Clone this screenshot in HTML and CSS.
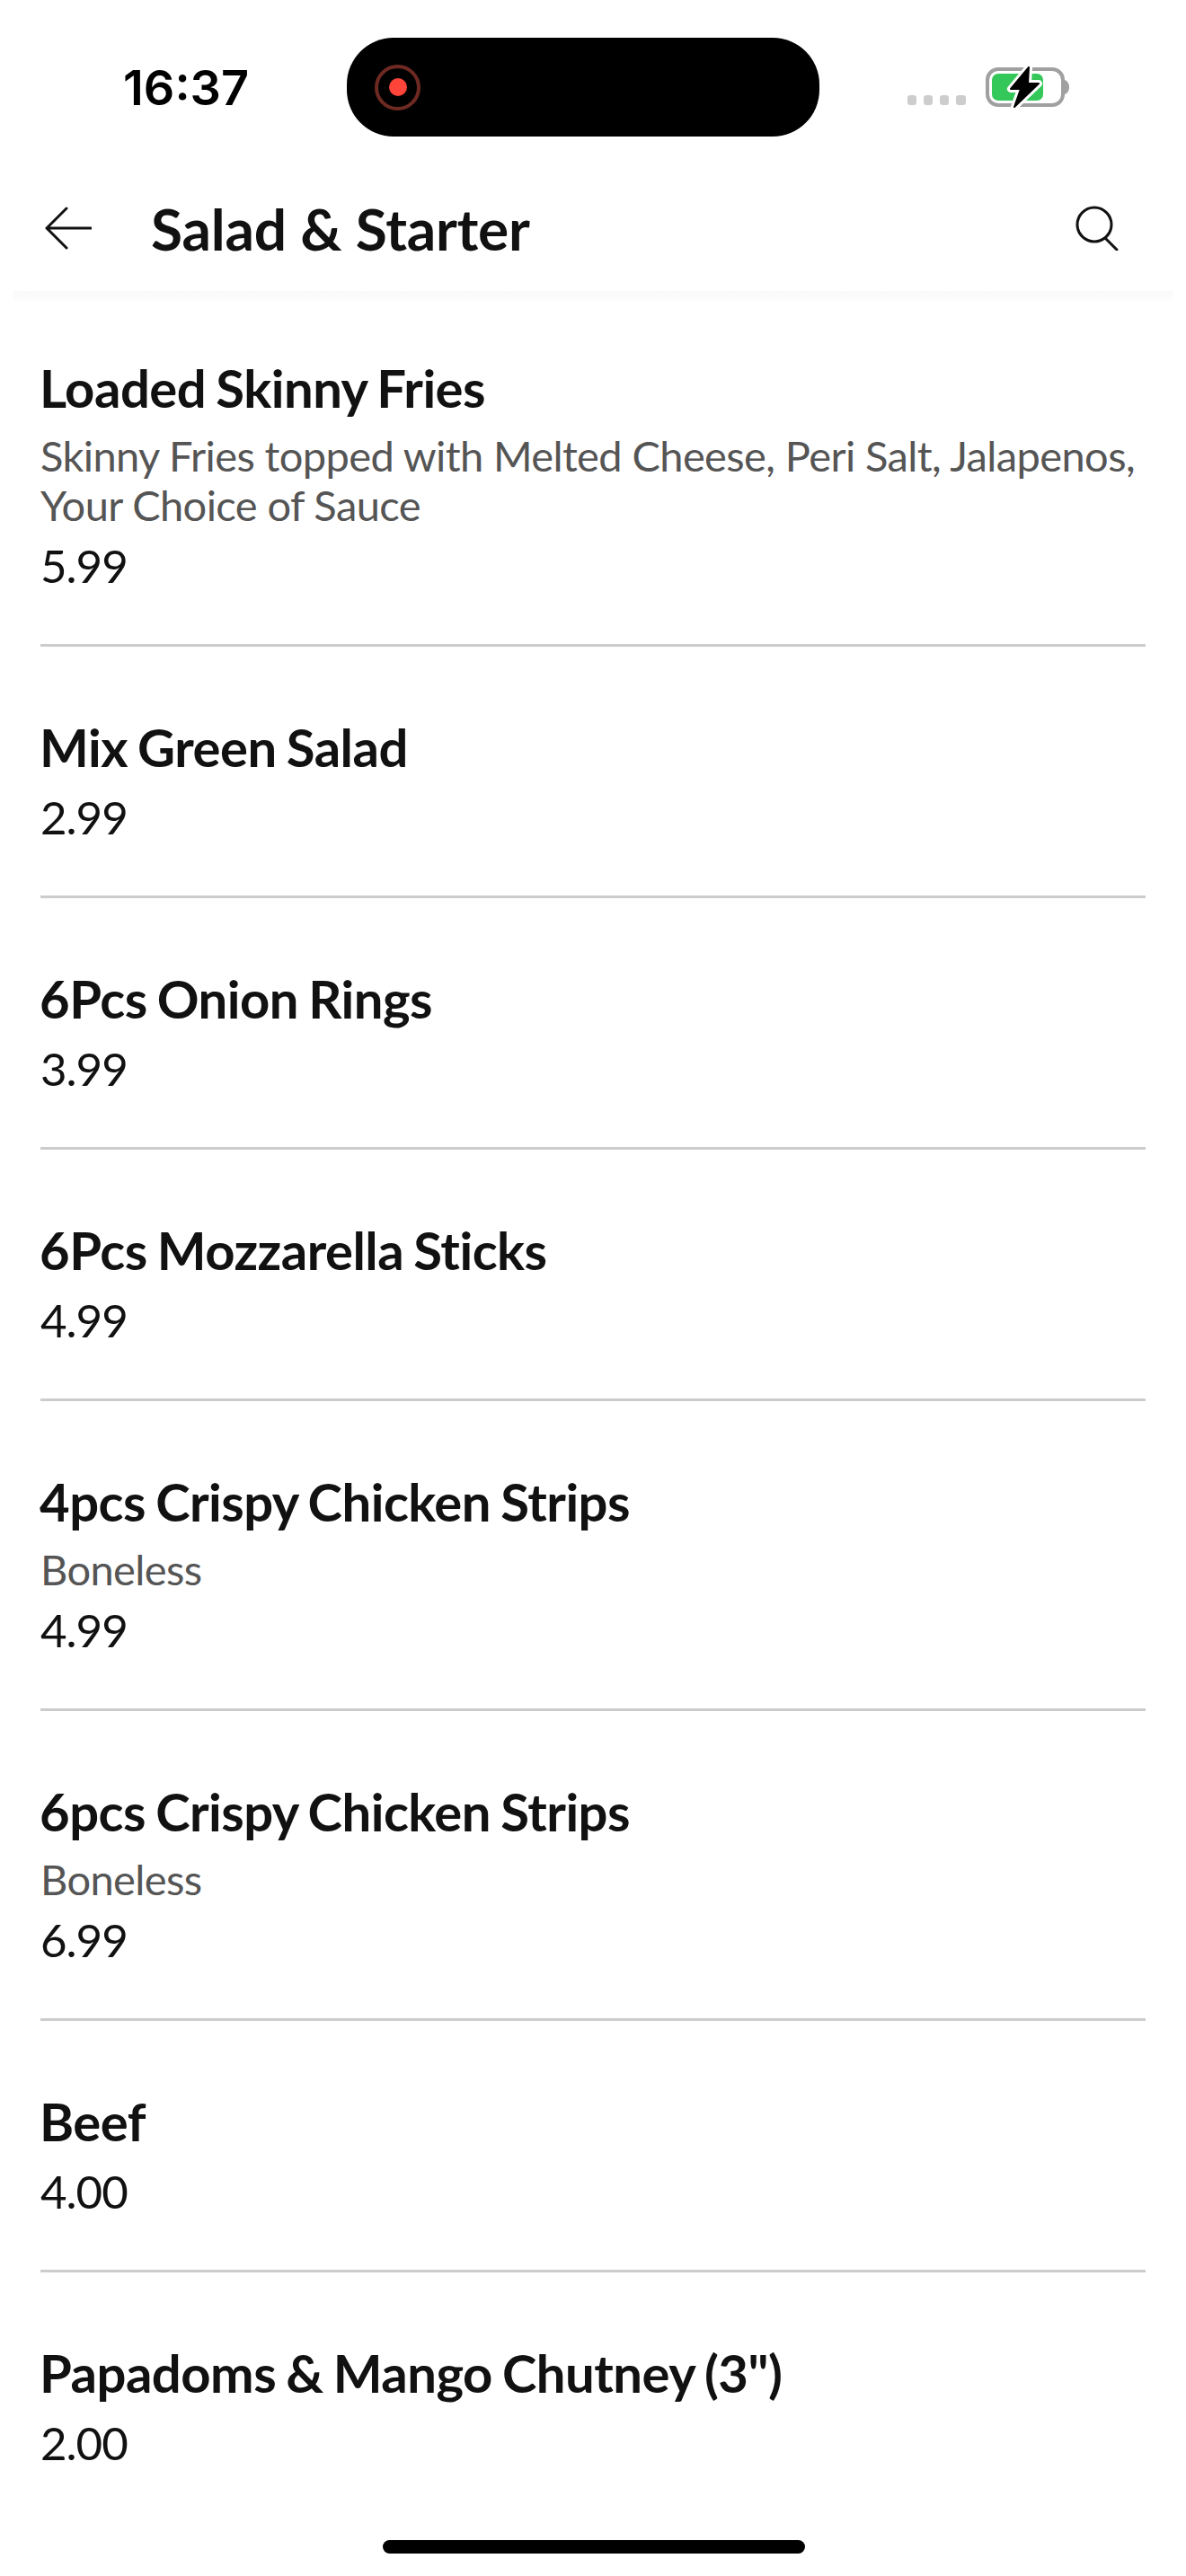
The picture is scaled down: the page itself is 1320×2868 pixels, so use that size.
FILE: index.html
```html
<!DOCTYPE html>
<html lang="en">
<head>
    <meta charset="UTF-8">
    <meta name="viewport" content="width=device-width, initial-scale=1.0">
    <title>Salad &amp; Starter</title>
    <link rel="stylesheet" href="styles.css">
</head>
<body>
    <div class="status-bar">
        <span class="time">16:37</span>
        <div class="island">
            <span class="record"><span class="record-dot"></span></span>
        </div>
        <svg class="status-icons" width="182" height="48" viewBox="0 0 182 48">
            <rect x="0" y="33" width="10" height="11" rx="3" fill="#cdcdcd"/>
            <rect x="18" y="33" width="10" height="11" rx="3" fill="#cdcdcd"/>
            <rect x="36" y="33" width="10" height="11" rx="3" fill="#cdcdcd"/>
            <rect x="54" y="33" width="11" height="11" rx="3" fill="#cdcdcd"/>
            <rect x="89" y="4" width="84" height="40" rx="12" fill="none" stroke="#a0a0a0" stroke-width="4"/>
            <path d="M175 16c3 1 5 4 5 8s-2 7-5 8z" fill="#a0a0a0"/>
            <rect x="94" y="9" width="57" height="30" rx="7" fill="#34c759"/>
            <path d="M135 2 L115 26 H126 L119 46 L146 20 H134 Z" fill="#000" stroke="#fff" stroke-width="8" stroke-linejoin="round" paint-order="stroke"/>
            <path d="M135 2 L115 26 H126 L119 46 L146 20 H134 Z" fill="#000" stroke="#000" stroke-width="2" stroke-linejoin="round"/>
        </svg>
    </div>

    <header class="nav">
        <svg class="nav-back" width="52" height="48" viewBox="0 0 52 48">
            <path d="M24 2 L2 24 L24 46 M2 24 H51" fill="none" stroke="#111" stroke-width="3" stroke-linecap="round" stroke-linejoin="round"/>
        </svg>
        <h1 class="nav-title">Salad &amp; Starter</h1>
        <svg class="nav-search" width="48" height="50" viewBox="0 0 48 50">
            <circle cx="21" cy="21" r="19" fill="none" stroke="#111" stroke-width="3"/>
            <path d="M33 36 L46 49" fill="none" stroke="#111" stroke-width="3" stroke-linecap="round"/>
        </svg>
    </header>
    <div class="nav-shadow"></div>

    <main>
        <ul class="menu">
            <li class="item">
                <h2 class="item-name">Loaded Skinny Fries</h2>
                <p class="item-desc">Skinny Fries topped with Melted Cheese, Peri Salt, Jalapenos, Your Choice of Sauce</p>
                <p class="item-price">5.99</p>
            </li>
            <li class="item">
                <h2 class="item-name">Mix Green Salad</h2>
                <p class="item-price">2.99</p>
            </li>
            <li class="item">
                <h2 class="item-name">6Pcs Onion Rings</h2>
                <p class="item-price">3.99</p>
            </li>
            <li class="item">
                <h2 class="item-name">6Pcs Mozzarella Sticks</h2>
                <p class="item-price">4.99</p>
            </li>
            <li class="item">
                <h2 class="item-name">4pcs Crispy Chicken Strips</h2>
                <p class="item-desc">Boneless</p>
                <p class="item-price">4.99</p>
            </li>
            <li class="item">
                <h2 class="item-name">6pcs Crispy Chicken Strips</h2>
                <p class="item-desc">Boneless</p>
                <p class="item-price">6.99</p>
            </li>
            <li class="item">
                <h2 class="item-name">Beef</h2>
                <p class="item-price">4.00</p>
            </li>
            <li class="item">
                <h2 class="item-name">Papadoms &amp; Mango Chutney (3")</h2>
                <p class="item-price">2.00</p>
            </li>
        </ul>
    </main>

    <div class="home-indicator"></div>
</body>
</html>
```

FILE: styles.css
```css
* {
    box-sizing: border-box;
}

html, body {
    height: 2868px;
    overflow: hidden;
}

body {
    margin: 0;
    position: relative;
    background-color: #fff;
    color: #111;
    font-family: Lato, "Liberation Sans", sans-serif;
}

/* Status bar */
.status-bar {
    display: flex;
    align-items: center;
    height: 186px;
    padding: 8px 0 0 137px;
}

.time {
    width: 249px;
    font-family: Inter, sans-serif;
    font-size: 54px;
    font-weight: 600;
    color: #000;
}

.island {
    display: flex;
    align-items: center;
    width: 526px;
    height: 110px;
    padding-left: 31px;
    background-color: #000;
    border-radius: 52px;
}

.record {
    display: flex;
    align-items: center;
    justify-content: center;
    width: 51px;
    height: 51px;
    border: 4px solid #6e2a22;
    border-radius: 50%;
}

.record-dot {
    width: 20px;
    height: 20px;
    background-color: #ff453a;
    border-radius: 50%;
}

.status-icons {
    margin-left: 98px;
}

/* Header */
.nav {
    display: flex;
    align-items: center;
    height: 140px;
    margin: 0 15px;
    padding: 0 60px 4px 35px;
}

.nav-title {
    flex: 1;
    margin: 0 0 0 66px;
    font-size: 64px;
    font-weight: 700;
    letter-spacing: -0.2px;
}

.nav-shadow {
    height: 14px;
    margin: -2px 15px -12px;
    background: linear-gradient(#f9f9f9, #fff);
}

/* Menu list */
.menu {
    list-style: none;
    margin: 0;
    padding: 0 45px;
}

.item {
    padding: 76px 0 55px;
    border-bottom: 3px solid #ccc;
}

.item:first-child {
    padding-top: 70px;
}

.item:last-child {
    border-bottom: none;
}

.item-name {
    margin: 0 0 0 -1px;
    font-size: 58px;
    font-weight: 700;
    line-height: 72px;
    letter-spacing: -0.5px;
    word-spacing: -2.5px;
}

.item-desc {
    margin: 12px 0 0;
    font-size: 47px;
    line-height: 55px;
    letter-spacing: -0.6px;
    color: #555;
}

.item-price {
    margin: 10px 0 0;
    font-size: 51px;
    line-height: 64px;
    letter-spacing: -1px;
}

.item-desc + .item-price {
    margin-top: 8px;
}

.home-indicator {
    position: absolute;
    left: 426px;
    bottom: 25px;
    width: 470px;
    height: 15px;
    background-color: #000;
    border-radius: 8px;
}
```
